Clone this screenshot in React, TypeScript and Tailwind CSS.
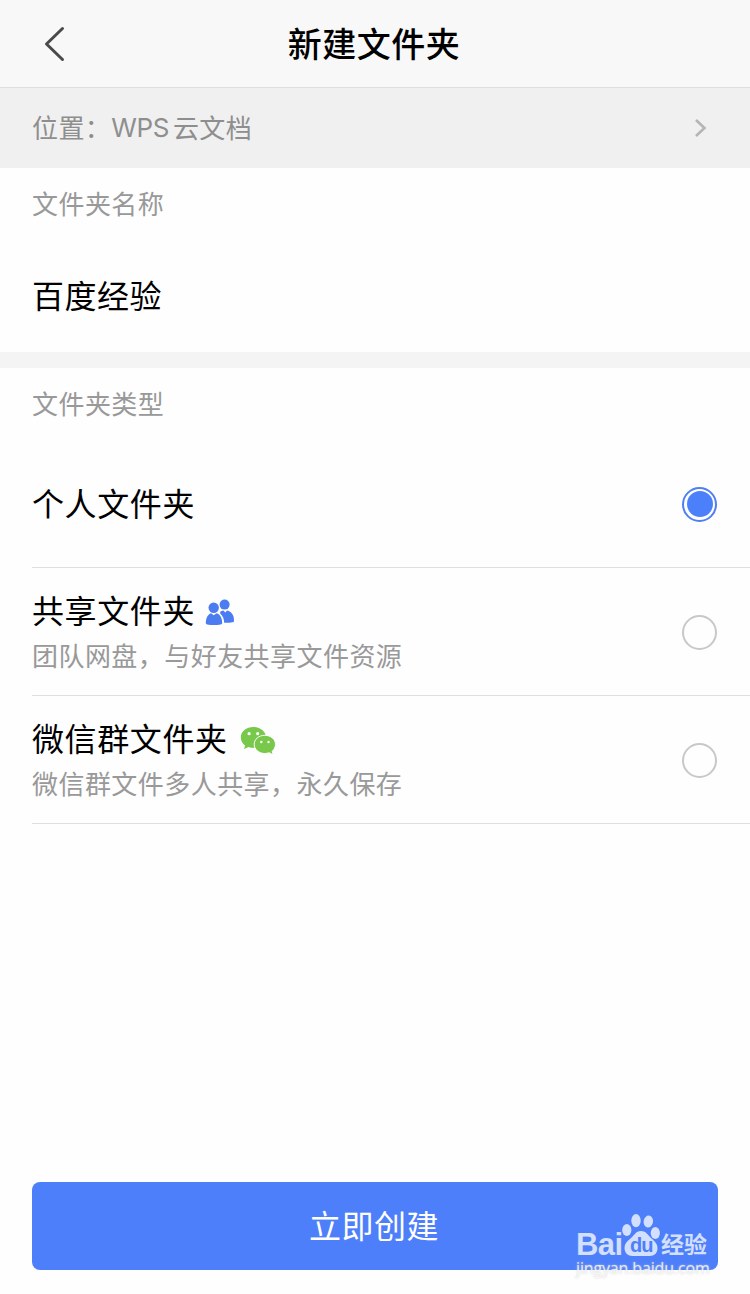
import type { ReactNode } from "react";

function Radio({ checked = false }: { checked?: boolean }) {
  return (
    <span
      role="radio"
      aria-checked={checked}
      className={
        checked
          ? "mt-px flex size-[35px] shrink-0 items-center justify-center rounded-full border-2 border-[#4e7ff5]"
          : "mt-px flex size-[35px] shrink-0 items-center justify-center rounded-full border-2 border-[#c8c8c8]"
      }
    >
      {checked && <span className="size-[26px] rounded-full bg-[#4c7ffa]" />}
    </span>
  );
}

function PeopleIcon() {
  return (
    <svg width="30" height="28" viewBox="0 0 30 28" fill="#4c7df0" className="ml-[10px] mt-[7px]">
      <circle cx="19.6" cy="5.6" r="5" />
      <path d="M15.6 12.2L18.4 11.6L20.4 13.4L22 11.4C26.6 12.2 29.2 16.6 29 21.4C29 22.8 28.5 23.1 27.3 23.3C24.7 23.8 21.8 23.9 19.2 23.7C19 20.3 18.2 17.2 15 14.2Z" />
      <circle cx="8.7" cy="8.8" r="5.2" />
      <path d="M6 14.2L8.8 16.2L11.6 14.2C15.3 15.2 17.2 19.5 17.2 23.7C17.2 24.7 16.8 25.1 15.7 25.4C11.5 26.2 6.1 26.2 2.2 25.4C1.2 25.1.8 24.7.8 23.7C1 19.4 2.4 15.4 6 14.2Z" />
    </svg>
  );
}

function WechatIcon() {
  return (
    <svg width="36" height="30" viewBox="0 0 36 30" className="ml-3 mt-[7px]">
      <path
        fill="#78c84b"
        d="M13.4 1C6.3 1 .8 5.6.8 11.5C.8 14.8 2.5 17.6 5.1 19.5L4 23L8.5 20.9C10 21.5 11.7 21.8 13.4 21.8C20.5 21.8 26 17.2 26 11.4S20.5 1 13.4 1Z"
      />
      <path
        fill="#78c84b"
        stroke="#fff"
        strokeWidth="1"
        d="M24.8 9.3C18.8 9.3 14.2 13.3 14.2 18.3S18.8 27.5 24.8 27.5C26.4 27.5 27.9 27.2 29.2 26.7L33.2 28.9L32.2 25.2C34.3 23.4 35.5 21 35.5 18.3C35.5 13.3 30.8 9.3 24.8 9.3Z"
      />
      <circle cx="9.1" cy="7.7" r="1.6" fill="#fff" />
      <circle cx="17.7" cy="7.7" r="1.6" fill="#fff" />
      <circle cx="21.3" cy="16" r="1.2" fill="#fff" />
      <circle cx="28.5" cy="16" r="1.2" fill="#fff" />
    </svg>
  );
}

function Option({ title, note, icon, checked }: { title: string; note?: string; icon?: ReactNode; checked?: boolean }) {
  return (
    <div className="ml-8 flex h-32 items-center justify-between border-b border-[#dfdfdf] pr-[33px]">
      <div className="pb-[3px]">
        <div className="flex h-12 items-center text-[32px] tracking-[0.6px] text-black">
          {title}
          {icon}
        </div>
        {note && <div className="flex h-[42px] items-center text-[26px] tracking-[0.45px] text-[#999]">{note}</div>}
      </div>
      <Radio checked={checked} />
    </div>
  );
}

function Watermark() {
  return (
    <div className="absolute left-[576px] top-[1212px] h-[66px] w-[136px] text-white/75">
      <div className="flex h-[46px] items-end">
        <span className="w-[46px] font-['Liberation_Sans'] text-[31px] font-bold leading-[26px] tracking-[-0.6px]">Bai</span>
        <div className="relative h-[46px] w-[38px] shrink-0">
          <svg width="38" height="46" viewBox="0 0 38 46" fill="currentColor">
            <ellipse cx="4.8" cy="18" rx="4.6" ry="6" />
            <ellipse cx="14" cy="8.6" rx="4.7" ry="6.6" />
            <ellipse cx="26.3" cy="9.5" rx="4.7" ry="6" transform="rotate(8 26 9.5)" />
            <ellipse cx="33.3" cy="21" rx="4.6" ry="6" />
            <path d="M19 19C13.5 19 12.5 23.5 8.5 26.5C4.5 29.5 2.5 32 2.5 36C2.5 41 6 44 10.5 44H27.5C32.5 44 35.5 41 35.5 36C35.5 32 33 29.5 29.5 26.5C26 23.5 24.5 19 19 19Z" />
          </svg>
          <span className="absolute left-2 top-[22px] font-['Liberation_Sans'] text-[20px] font-bold leading-[22px] tracking-[-1px] text-[#4e7ffa]">du</span>
        </div>
        <span className="ml-px whitespace-nowrap text-[23px] font-bold leading-[29px]">经验</span>
      </div>
      <div className="font-['Open_Sans'] text-[16px] leading-[20px] tracking-[-0.15px] [text-shadow:0_0_2px_#ccc]">jingyan.baidu.com</div>
    </div>
  );
}

export default function App() {
  return (
    <div className="relative flex h-[1294px] w-[750px] flex-col bg-[#fefefe] font-['Noto_Sans_CJK_SC',sans-serif]">
      <header className="grid h-[88px] grid-cols-[1fr_auto_1fr] items-center border-b border-[#dedede] bg-[#f8f8f8]">
        <svg width="22" height="36" viewBox="0 0 22 36" className="ml-[44px]" fill="none" stroke="#4a4a4a" strokeWidth="3" strokeLinecap="round" strokeLinejoin="round">
          <path d="M18.5 2.5L2.5 18L18.5 33.5" />
        </svg>
        <h1 className="pb-px pr-0.5 text-[34px] font-medium leading-[50px] tracking-[0.5px] text-black">新建文件夹</h1>
      </header>

      <div className="flex h-20 items-center justify-between bg-[#f0f0f0] pl-8 pr-[42px] text-[26px] tracking-[0.4px] text-[#8e8e8e]">
        <div className="flex pb-[3px]">
          <span>位置：</span>
          <span className="pt-px font-['Inter'] tracking-[-0.4px]">WPS</span>
          <span className="ml-1">云文档</span>
        </div>
        <svg width="14" height="20" viewBox="0 0 14 20" fill="none" stroke="#b5b5b5" strokeWidth="2.6">
          <path d="M2 2L10.5 10L2 18" />
        </svg>
      </div>

      <section className="h-[184px] pl-8">
        <div className="flex h-[72px] items-center pb-[3px] text-[26px] tracking-[0.45px] text-[#999]">文件夹名称</div>
        <div className="flex h-28 items-center pb-1 text-[32px] tracking-[0.5px] text-black">百度经验</div>
      </section>

      <div className="h-4 bg-[#f4f4f4]" />

      <section>
        <div className="flex h-[72px] items-center pb-[3px] pl-8 text-[26px] tracking-[0.45px] text-[#999]">文件夹类型</div>
        <Option title="个人文件夹" checked />
        <Option title="共享文件夹" note="团队网盘，与好友共享文件资源" icon={<PeopleIcon />} />
        <Option title="微信群文件夹" note="微信群文件多人共享，永久保存" icon={<WechatIcon />} />
      </section>

      <button className="mx-8 mb-6 mt-auto h-[88px] rounded-lg bg-[#4e7ffa] pb-1 pr-0.5 text-[32px] tracking-[0.5px] text-white">立即创建</button>

      <Watermark />
    </div>
  );
}
